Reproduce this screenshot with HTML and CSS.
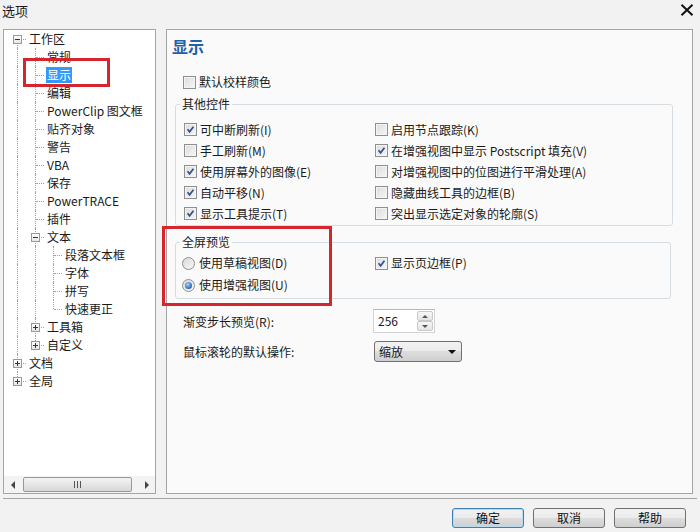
FILE: index.html
```html
<!DOCTYPE html>
<html lang="zh-CN">
<head>
    <meta charset="UTF-8">
    <title>选项</title>
    <link rel="stylesheet" href="styles.css">
</head>
<body>
<div class="window">
    <div class="titlebar">
        <span class="caption">选项</span>
        <svg class="close" width="14" height="12" viewBox="0 0 14 12">
            <path d="M1.5 0.8 L12.5 11.2 M12.5 0.8 L1.5 11.2" stroke="#111" stroke-width="2" fill="none"/>
        </svg>
    </div>

    <div class="content">
        <!-- category tree -->
        <div class="tree">
            <ul class="tree-list">
                <li class="row"><span class="tc x first"><span class="box minus"></span></span><span class="label">工作区</span></li>
                <li class="row"><span class="tc v"></span><span class="tc t"></span><span class="label">常规</span></li>
                <li class="row"><span class="tc v"></span><span class="tc t"></span><span class="label sel">显示</span></li>
                <li class="row"><span class="tc v"></span><span class="tc t"></span><span class="label">编辑</span></li>
                <li class="row"><span class="tc v"></span><span class="tc t"></span><span class="label">PowerClip 图文框</span></li>
                <li class="row"><span class="tc v"></span><span class="tc t"></span><span class="label">贴齐对象</span></li>
                <li class="row"><span class="tc v"></span><span class="tc t"></span><span class="label">警告</span></li>
                <li class="row"><span class="tc v"></span><span class="tc t"></span><span class="label">VBA</span></li>
                <li class="row"><span class="tc v"></span><span class="tc t"></span><span class="label">保存</span></li>
                <li class="row"><span class="tc v"></span><span class="tc t"></span><span class="label">PowerTRACE</span></li>
                <li class="row"><span class="tc v"></span><span class="tc t"></span><span class="label">插件</span></li>
                <li class="row"><span class="tc v"></span><span class="tc x mid"><span class="box minus"></span></span><span class="label">文本</span></li>
                <li class="row"><span class="tc v"></span><span class="tc v"></span><span class="tc t"></span><span class="label">段落文本框</span></li>
                <li class="row"><span class="tc v"></span><span class="tc v"></span><span class="tc t"></span><span class="label">字体</span></li>
                <li class="row"><span class="tc v"></span><span class="tc v"></span><span class="tc t"></span><span class="label">拼写</span></li>
                <li class="row"><span class="tc v"></span><span class="tc v"></span><span class="tc l"></span><span class="label">快速更正</span></li>
                <li class="row"><span class="tc v"></span><span class="tc x mid"><span class="box plus"></span></span><span class="label">工具箱</span></li>
                <li class="row"><span class="tc v"></span><span class="tc x last"><span class="box plus"></span></span><span class="label">自定义</span></li>
                <li class="row"><span class="tc x mid"><span class="box plus"></span></span><span class="label">文档</span></li>
                <li class="row"><span class="tc x last"><span class="box plus"></span></span><span class="label">全局</span></li>
            </ul>
            <div class="hscroll">
                <span class="sb-arrow"><span class="tri-left"></span></span>
                <span class="sb-thumb"><span class="grip"></span></span>
                <span class="sb-arrow"><span class="tri-right"></span></span>
            </div>
        </div>

        <!-- settings page -->
        <div class="page">
            <h1 class="page-title">显示</h1>
            <label class="check default-check"><span class="cb"></span>默认校样颜色</label>

            <fieldset class="group group-other">
                <legend>其他控件</legend>
                <div class="check-grid">
                    <label class="check"><span class="cb on"><svg viewBox="0 0 13 13"><path d="M3 6.3 L5.4 9.2 L10 3.2"/></svg></span>可中断刷新(I)</label>
                    <label class="check"><span class="cb"></span>启用节点跟踪(K)</label>
                    <label class="check"><span class="cb"></span>手工刷新(M)</label>
                    <label class="check"><span class="cb on"><svg viewBox="0 0 13 13"><path d="M3 6.3 L5.4 9.2 L10 3.2"/></svg></span>在增强视图中显示 Postscript 填充(V)</label>
                    <label class="check"><span class="cb on"><svg viewBox="0 0 13 13"><path d="M3 6.3 L5.4 9.2 L10 3.2"/></svg></span>使用屏幕外的图像(E)</label>
                    <label class="check"><span class="cb"></span>对增强视图中的位图进行平滑处理(A)</label>
                    <label class="check"><span class="cb on"><svg viewBox="0 0 13 13"><path d="M3 6.3 L5.4 9.2 L10 3.2"/></svg></span>自动平移(N)</label>
                    <label class="check"><span class="cb"></span>隐藏曲线工具的边框(B)</label>
                    <label class="check"><span class="cb on"><svg viewBox="0 0 13 13"><path d="M3 6.3 L5.4 9.2 L10 3.2"/></svg></span>显示工具提示(T)</label>
                    <label class="check"><span class="cb"></span>突出显示选定对象的轮廓(S)</label>
                </div>
            </fieldset>

            <fieldset class="group group-full">
                <legend>全屏预览</legend>
                <div class="full-cols">
                    <div class="radio-col">
                        <label class="radio"><span class="rb"></span>使用草稿视图(D)</label>
                        <label class="radio"><span class="rb on"></span>使用增强视图(U)</label>
                    </div>
                    <label class="check"><span class="cb on"><svg viewBox="0 0 13 13"><path d="M3 6.3 L5.4 9.2 L10 3.2"/></svg></span>显示页边框(P)</label>
                </div>
            </fieldset>

            <div class="field field-spin">
                <span class="field-label">渐变步长预览(R):</span>
                <div class="spin">
                    <span class="spin-val">256</span>
                    <span class="spin-btns">
                        <span class="spin-btn"><span class="tri-up"></span></span>
                        <span class="spin-btn"><span class="tri-down"></span></span>
                    </span>
                </div>
            </div>
            <div class="field field-combo">
                <span class="field-label">鼠标滚轮的默认操作:</span>
                <div class="combo"><span>缩放</span><span class="combo-arrow"></span></div>
            </div>
        </div>
    </div>

    <div class="footer">
        <button class="btn default">确定</button>
        <button class="btn">取消</button>
        <button class="btn">帮助</button>
    </div>

    <!-- highlight frames -->
    <div class="mark mark-tree"></div>
    <div class="mark mark-full"></div>
</div>
</body>
</html>
```

FILE: styles.css
```css
* {
    box-sizing: border-box;
}
body {
    margin: 0;
    font-family: "Noto Sans CJK SC", "Noto Sans", sans-serif;
    font-size: 12px;
    color: #1a1a1a;
}
.window {
    position: relative;
    width: 700px;
    height: 532px;
    background: #f2f2f2;
    overflow: hidden;
}

/* title bar */
.titlebar {
    height: 29px;
    display: flex;
    align-items: flex-start;
    justify-content: space-between;
    padding: 2px 6px 0 2px;
}
.caption {
    font-size: 13px;
    line-height: 18px;
}
.close {
    margin-top: 2px;
}

.content {
    display: flex;
    gap: 10px;
    height: 465px;
    padding-left: 3px;
}

/* tree */
.tree {
    width: 153px;
    border: 1px solid #a5a5a5;
    background: #fff;
    display: flex;
    flex-direction: column;
}
.tree-list {
    flex: 1;
    list-style: none;
    margin: 0;
    padding: 0 0 0 4px;
}
.row {
    display: flex;
    align-items: center;
    height: 18px;
    white-space: nowrap;
}
.tc {
    position: relative;
    flex: none;
    width: 18px;
    height: 18px;
}
.tc::before,
.tc::after {
    content: "";
    position: absolute;
}
.tc.v::before,
.tc.t::before,
.tc.x.mid::before {
    left: 9px;
    top: 0;
    bottom: 0;
    border-left: 1px dotted #a0a0a0;
}
.tc.l::before,
.tc.x.last::before {
    left: 9px;
    top: 0;
    height: 9px;
    border-left: 1px dotted #a0a0a0;
}
.tc.x.first::before {
    left: 9px;
    top: 9px;
    bottom: 0;
    border-left: 1px dotted #a0a0a0;
}
.tc.t::after,
.tc.l::after,
.tc.x::after {
    left: 10px;
    top: 9px;
    width: 8px;
    border-top: 1px dotted #a0a0a0;
}
.box {
    position: absolute;
    z-index: 1;
    left: 5px;
    top: 5px;
    width: 9px;
    height: 9px;
    border: 1px solid #999;
    background: linear-gradient(#fff, #e6e6e6);
}
.box::before,
.box::after {
    content: "";
    position: absolute;
    background: #333;
}
.box::before {
    left: 1px;
    top: 3px;
    width: 5px;
    height: 1px;
}
.box.plus::after {
    left: 3px;
    top: 1px;
    width: 1px;
    height: 5px;
}
.label {
    margin-left: 2px;
    padding: 0 1px;
    line-height: 16px;
}
.label.sel {
    background: #3399ff;
    color: #fff;
}

/* tree scrollbar */
.hscroll {
    height: 17px;
    display: flex;
    align-items: center;
    background: #f3f3f3;
}
.sb-arrow {
    width: 17px;
    height: 17px;
    display: flex;
    align-items: center;
    justify-content: center;
}
.tri-left {
    border-right: 4px solid #444;
    border-top: 4px solid transparent;
    border-bottom: 4px solid transparent;
}
.tri-right {
    border-left: 4px solid #444;
    border-top: 4px solid transparent;
    border-bottom: 4px solid transparent;
}
.sb-thumb {
    width: 109px;
    height: 15px;
    margin: 0 6px 0 2px;
    border: 1px solid #999;
    border-radius: 2px;
    background: linear-gradient(#f4f4f4, #e6e6e6 50%, #d6d6d6);
    display: flex;
    align-items: center;
    justify-content: center;
}
.grip {
    width: 7px;
    height: 7px;
    background: repeating-linear-gradient(90deg, #555 0 1px, transparent 1px 3px);
}

/* settings page */
.page {
    width: 527px;
    border: 1px solid #a5a5a5;
    background: #fafafa;
    padding: 7px 19px 0 8px;
}
.page-title {
    margin: 0 0 0 -3px;
    font-size: 16px;
    line-height: 18px;
    font-weight: bold;
    color: #1f62a6;
}
.check,
.radio {
    display: flex;
    align-items: center;
    gap: 3px;
    white-space: nowrap;
    line-height: 16px;
}
.default-check {
    height: 20px;
    margin: 17px 0 0 8px;
}
.cb {
    flex: none;
    width: 13px;
    height: 13px;
    border: 1px solid #8e8f8f;
    background: linear-gradient(135deg, #dcdcdc, #f6f6f6);
    box-shadow: inset 0 0 0 1px #f4f4f4;
}
.cb svg {
    display: block;
    width: 11px;
    height: 11px;
}
.cb svg path {
    fill: none;
    stroke: #31508c;
    stroke-width: 2;
}
.rb {
    flex: none;
    width: 13px;
    height: 13px;
    margin-left: -2px;
    margin-right: 1px;
    border: 1px solid #8e8f8f;
    border-radius: 50%;
    background: linear-gradient(135deg, #d8d8d8, #f8f8f8);
    position: relative;
}
.rb.on::after {
    content: "";
    position: absolute;
    left: 2px;
    top: 2px;
    width: 7px;
    height: 7px;
    border-radius: 50%;
    background: radial-gradient(circle at 40% 35%, #a9d3f5, #2a64b4 70%, #1b4a8c);
}

/* group boxes */
.group {
    margin: 0;
    min-width: 0;
    border: 1px solid #d6dde2;
    border-radius: 3px;
}
.group legend {
    margin-left: -4px;
    padding: 0 2px;
    line-height: 16px;
}
.group-other {
    margin-top: 4px;
    padding: 7px 0 1px 8px;
}
.check-grid {
    display: grid;
    grid-template-columns: 191px auto;
    grid-auto-rows: 21px;
}
.group-full {
    margin: 8px 2px 0 0;
    padding: 2px 0 2px 8px;
}
.full-cols {
    display: flex;
    align-items: flex-start;
}
.radio-col {
    width: 191px;
    display: flex;
    flex-direction: column;
}
.radio-col .radio {
    height: 22px;
}
.full-cols > .check {
    height: 22px;
}

/* spin and combo fields */
.field {
    display: flex;
    align-items: center;
    padding-left: 8px;
}
.field-label {
    width: 190px;
}
.field-spin {
    margin-top: 10px;
}
.spin {
    width: 62px;
    height: 24px;
    display: flex;
    border: 1px solid #d0d4d9;
    border-top-color: #b5b9bf;
    background: #fff;
}
.spin-val {
    flex: 1;
    padding-left: 4px;
    line-height: 22px;
}
.spin-btns {
    width: 16px;
    margin: 1px 1px 1px 0;
    display: flex;
    flex-direction: column;
}
.spin-btn {
    flex: 1;
    border: 1px solid #c8c8c8;
    border-radius: 2px;
    background: linear-gradient(#f7f7f7, #e4e4e4);
    display: flex;
    align-items: center;
    justify-content: center;
}
.tri-up {
    border-bottom: 3px solid #555;
    border-left: 3px solid transparent;
    border-right: 3px solid transparent;
}
.tri-down {
    border-top: 3px solid #555;
    border-left: 3px solid transparent;
    border-right: 3px solid transparent;
}
.field-combo {
    margin-top: 8px;
}
.combo {
    width: 88px;
    height: 21px;
    margin-left: 1px;
    display: flex;
    align-items: center;
    justify-content: space-between;
    padding: 0 5px 0 4px;
    border: 1px solid #707070;
    border-radius: 3px;
    background: linear-gradient(#f2f2f2, #ebebeb 50%, #dddddd 50%, #cfcfcf);
}
.combo-arrow {
    border-top: 4px solid #111;
    border-left: 4px solid transparent;
    border-right: 4px solid transparent;
}

/* dialog buttons */
.footer {
    margin: 4px 3px 0;
    border-top: 1px solid #a5a5a5;
    padding: 9px 11px 0 0;
    display: flex;
    justify-content: flex-end;
    gap: 9px;
}
.btn {
    width: 72px;
    height: 20px;
    padding: 0;
    font: inherit;
    line-height: 16px;
    color: #111;
    border: 1px solid #707070;
    border-radius: 3px;
    background: linear-gradient(#f2f2f2, #ebebeb 50%, #dddddd 50%, #cfcfcf);
}
.btn.default {
    border-color: #3c7fb1;
    box-shadow: inset 0 0 0 1px #b8dcf2;
}

/* red highlight frames */
.mark {
    position: absolute;
    border: 3px solid #d4262c;
}
.mark-tree {
    left: 23px;
    top: 58px;
    width: 87px;
    height: 29px;
}
.mark-full {
    left: 162px;
    top: 226px;
    width: 170px;
    height: 80px;
}
```
